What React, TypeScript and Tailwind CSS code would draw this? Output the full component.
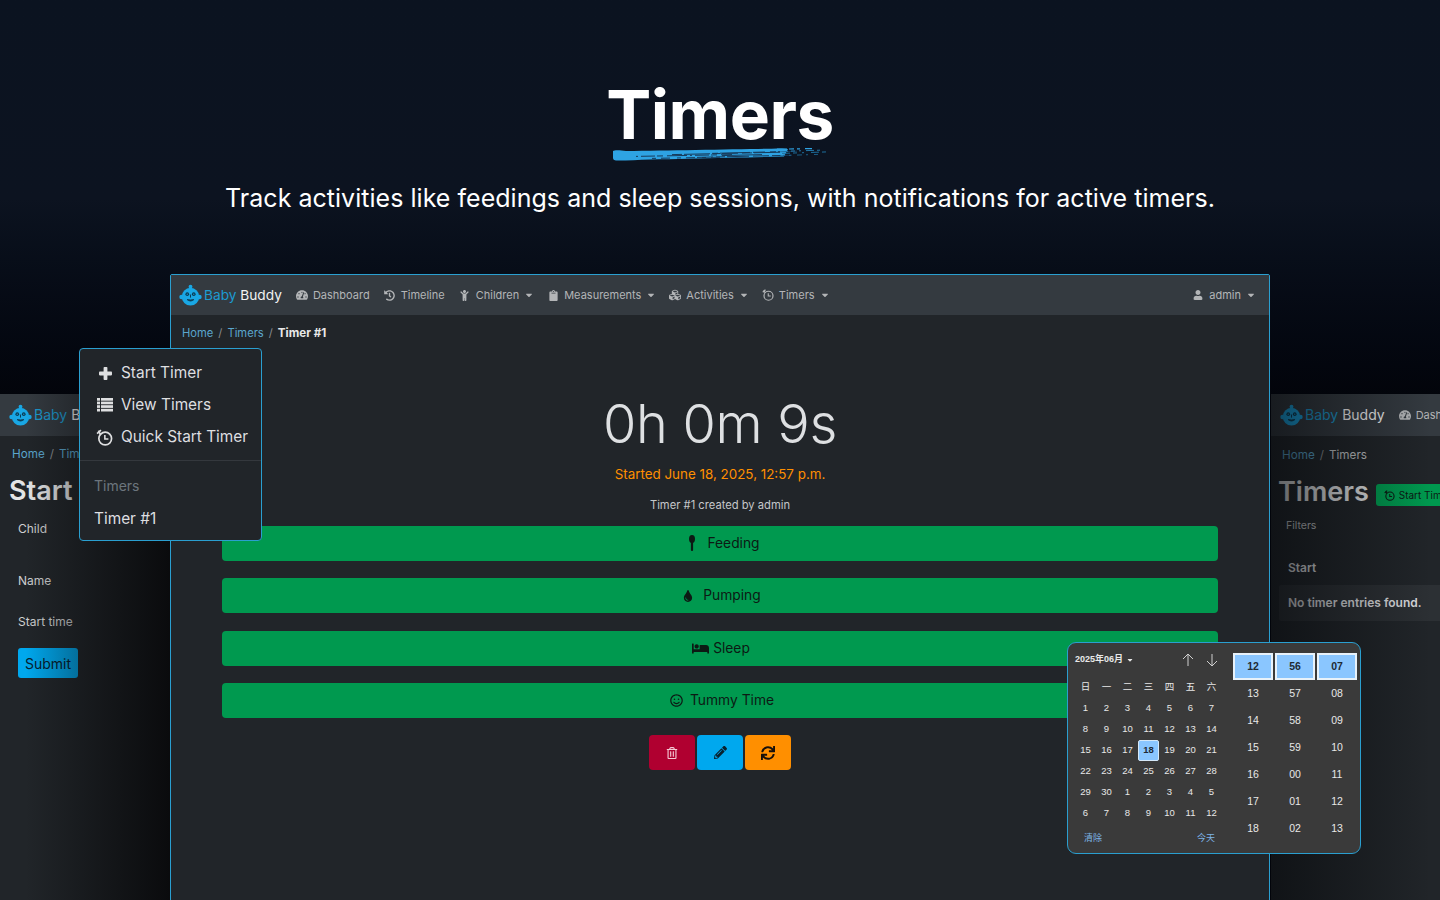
import React from "react";
import { FaBed, FaCaretDown, FaChild, FaClipboard, FaCubes, FaHistory, FaPencilAlt, FaRegSmile, FaRegTrashAlt, FaSync, FaTachometerAlt, FaTint, FaUser } from "react-icons/fa";

function Logo({ size = 23 }: { size?: number }) {
  return (
    <svg width={size} height={size} viewBox="0 0 24 24" className="shrink-0">
      <circle cx="12" cy="13.2" r="9.2" fill="#19a7e4" />
      <circle cx="2.6" cy="13.5" r="2.3" fill="#19a7e4" />
      <circle cx="21.4" cy="13.5" r="2.3" fill="#19a7e4" />
      <circle cx="12" cy="2.8" r="2" fill="#19a7e4" />
      <rect x="11" y="3" width="2" height="3" fill="#19a7e4" />
      <circle cx="8.6" cy="10.6" r="1.9" fill="#0a3a52" />
      <circle cx="15.4" cy="10.6" r="1.9" fill="#0a3a52" />
      <circle cx="8.6" cy="10.6" r="0.7" fill="#19a7e4" />
      <circle cx="15.4" cy="10.6" r="0.7" fill="#19a7e4" />
      <path d="M12 11v3.2" stroke="#0a3a52" strokeWidth="1" />
      <path d="M8.5 16.3c2.2 1.9 4.8 1.9 7 0-2.3.5-4.7.5-7 0z" fill="#0a3a52" stroke="#0a3a52" strokeWidth="0.9" strokeLinejoin="round" />
    </svg>
  );
}

function TimerIcon({ size = 12, className = "" }: { size?: number; className?: string }) {
  return (
    <svg width={size} height={size} viewBox="0 0 24 24" fill="none" stroke="currentColor" className={`shrink-0 ${className}`}>
      <circle cx="13" cy="13.5" r="9" strokeWidth="2.4" />
      <path d="M12.5 8.5v5.5h5" strokeWidth="2.2" />
      <path d="M1.5 6.5 7 1.5M3.5 2.2l3 6" strokeWidth="2.4" />
    </svg>
  );
}

function ListIcon() {
  return (
    <svg width="16" height="14" viewBox="0 0 16 14" fill="currentColor" className="shrink-0">
      {[0, 3.6, 7.2, 10.8].map((y) => (
        <g key={y}>
          <rect x="0" y={y} width="3" height="2.7" />
          <rect x="4" y={y} width="12" height="2.7" />
        </g>
      ))}
    </svg>
  );
}

function PlusIcon() {
  return (
    <svg width="13" height="13" viewBox="0 0 13 13" fill="currentColor" className="shrink-0 mr-[1px]">
      <rect x="4.6" y="0" width="3.8" height="13" rx="0.8" />
      <rect x="0" y="4.6" width="13" height="3.8" rx="0.8" />
    </svg>
  );
}

function SpoonIcon() {
  return (
    <svg width="8" height="16" viewBox="0 0 8 16" fill="currentColor" className="shrink-0">
      <ellipse cx="4" cy="4" rx="3" ry="4" />
      <rect x="2.9" y="6" width="2.2" height="10" rx="1" />
    </svg>
  );
}

function NavItem({ icon, label, caret }: { icon: React.ReactNode; label: string; caret?: boolean }) {
  return (
    <div className="flex items-center gap-[5px] text-[#b3b5b7] text-[11px] leading-[14px] whitespace-nowrap">
      <div className="w-[12px] flex justify-center">{icon}</div>
      <span>{label}</span>
      {caret && <FaCaretDown className="text-[10px] -mr-[1px]" />}
    </div>
  );
}

function Brand({ textClass }: { textClass: string }) {
  return (
    <div className="flex items-center gap-[2px] shrink-0">
      <Logo />
      <span className={`${textClass} leading-[18px] -mt-[1px] whitespace-nowrap`}>
        <span className="text-[#1c9bd1]">Baby</span> <span className="text-[#f2f2f2]">Buddy</span>
      </span>
    </div>
  );
}

const actions = [
  { label: "Feeding", icon: <SpoonIcon />, cls: "gap-[11px] pl-[8px]" },
  { label: "Pumping", icon: <FaTint className="text-[12px]" />, cls: "gap-[9px] pl-[3px]" },
  { label: "Sleep", icon: <FaBed className="text-[17px]" />, cls: "gap-[4px] pl-[2px]" },
  { label: "Tummy Time", icon: <FaRegSmile className="text-[13px]" />, cls: "gap-[7px] pl-[4px]" },
];

const weeks = [
  [1, 2, 3, 4, 5, 6, 7],
  [8, 9, 10, 11, 12, 13, 14],
  [15, 16, 17, 18, 19, 20, 21],
  [22, 23, 24, 25, 26, 27, 28],
  [29, 30, 1, 2, 3, 4, 5],
  [6, 7, 8, 9, 10, 11, 12],
];
const times = [
  ["12", "56", "07"],
  ["13", "57", "08"],
  ["14", "58", "09"],
  ["15", "59", "10"],
  ["16", "00", "11"],
  ["17", "01", "12"],
  ["18", "02", "13"],
];

function Calendar() {
  return (
    <div className="absolute left-[1067px] top-[642px] w-[294px] h-[212px] bg-[#3a3a3a] border border-[#2a9fd0] rounded-[9px] flex pl-[7px] pr-[3px] [font-family:'Liberation_Sans','Noto_Sans_CJK_SC',sans-serif] text-[#e8e8e8]">
      <div className="w-[154px] flex flex-col pt-[8px]">
        <div className="flex items-center h-[17px] text-[9px] font-bold whitespace-nowrap">
          <span className="flex items-center gap-[3px]">2025年06月<FaCaretDown className="text-[8px]" /></span>
          <svg width="14" height="14" viewBox="0 0 14 14" fill="none" stroke="#cfcfcf" strokeWidth="1" className="ml-[47px]"><path d="M7 13V1M2 6l5-5 5 5" /></svg>
          <svg width="14" height="14" viewBox="0 0 14 14" fill="none" stroke="#cfcfcf" strokeWidth="1" className="ml-[10px]"><path d="M7 1v12M2 8l5 5 5-5" /></svg>
        </div>
        <div className="grid grid-cols-7 w-[147px] mt-[9px] text-[9.5px] text-center">
          {["日", "一", "二", "三", "四", "五", "六"].map((d) => (
            <div key={d} className="h-[21px] flex items-center justify-center">{d}</div>
          ))}
          {weeks.flat().map((d, i) => (
            <div key={i} className="h-[21px] flex items-center justify-center">
              <span className={i === 17 ? "w-[21px] h-[21px] flex items-center justify-center rounded-[2px] bg-[#8ac6ff] border border-[#d5e8f8] text-[#1f2a33] font-bold" : ""}>{d}</span>
            </div>
          ))}
        </div>
        <div className="flex justify-between w-[140px] pl-[9px] mt-[8px] text-[9px] text-[#7db4e6]">
          <span>清除</span>
          <span>今天</span>
        </div>
      </div>
      <div className="flex flex-col pt-[10px] pl-[11px] text-[10.5px]">
        {times.map((row, r) => (
          <div key={r} className="flex gap-[2px]">
            {row.map((t, c) => (
              <div key={c} className={`w-[40px] h-[27px] flex items-center justify-center ${r === 0 ? "bg-[#8ac6ff] border-2 border-[#e8f2fa] text-[#1f2a33] font-bold" : ""}`}>{t}</div>
            ))}
          </div>
        ))}
      </div>
    </div>
  );
}

function Dropdown() {
  const items = [
    { label: "Start Timer", icon: <PlusIcon /> },
    { label: "View Timers", icon: <ListIcon /> },
    { label: "Quick Start Timer", icon: <TimerIcon size={17} /> },
  ];
  return (
    <div className="absolute left-[79px] top-[348px] w-[183px] h-[193px] bg-[#212529] border border-[#2a9fd0] rounded-[4px] flex flex-col pt-[8px] text-[#dedfe0] text-[15.4px]">
      {items.map((it) => (
        <div key={it.label} className="h-[32px] flex items-center gap-[8px] whitespace-nowrap">
          <div className="w-[33px] flex justify-end">{it.icon}</div>
          <span>{it.label}</span>
        </div>
      ))}
      <div className="h-px bg-[#34383d] mt-[7px]" />
      <div className="pl-[14px] mt-[16px] text-[14px] leading-[17px] text-[#6c757d]">Timers</div>
      <div className="pl-[14px] mt-[15px] leading-[19px]">Timer #1</div>
    </div>
  );
}

function MainWindow() {
  return (
    <div className="absolute left-[170px] top-[274px] w-[1100px] h-[640px] bg-[#212529] border border-[#2a9fd0] rounded-t-[2px] flex flex-col">
      <div className="h-[40px] bg-[#343a40] flex items-center pl-[8px] pr-[14px] shrink-0">
        <Brand textClass="text-[13.7px]" />
        <div className="flex items-center gap-[14px] ml-[14px] flex-1">
          <NavItem icon={<FaTachometerAlt className="text-[12px]" />} label="Dashboard" />
          <NavItem icon={<FaHistory className="text-[11px]" />} label="Timeline" />
          <NavItem icon={<FaChild className="text-[11px]" />} label="Children" caret />
          <NavItem icon={<FaClipboard className="text-[11px]" />} label="Measurements" caret />
          <NavItem icon={<FaCubes className="text-[14px]" />} label="Activities" caret />
          <NavItem icon={<TimerIcon size={12} />} label="Timers" caret />
        </div>
        <NavItem icon={<FaUser className="text-[10px]" />} label="admin" caret />
      </div>
      <div className="flex items-center gap-[5px] pl-[11px] mt-[11px] text-[11.2px] leading-[15px] text-[#5ba6cd]">
        <span>Home</span><span className="text-[#8a8d90]">/</span><span>Timers</span><span className="text-[#8a8d90]">/</span>
        <span className="text-[#e8e8e8] font-bold text-[11.6px]">Timer #1</span>
      </div>
      <div className="flex flex-col items-center">
        <div className="text-[54px] font-light leading-[68px] mt-[49px] text-[#dee0e2] tracking-[-0.3px]">0h 0m 9s</div>
        <div className="text-[13.4px] leading-[17px] mt-[8px] text-[#ff8f00]">Started June 18, 2025, 12:57 p.m.</div>
        <div className="text-[11.2px] leading-[15px] mt-[15px] text-[#c5c7c9]">Timer #1 created by admin</div>
        <div className="w-[996px] mt-[12.5px] flex flex-col gap-[17.5px]">
          {actions.map((a) => (
            <div key={a.label} className={`h-[35px] rounded-[4px] bg-[#00994f] text-[#0c1a14] text-[13.8px] flex items-center justify-center ${a.cls}`}>
              {a.icon}
              <span>{a.label}</span>
            </div>
          ))}
        </div>
        <div className="flex gap-[2px] mt-[17px]">
          <div className="w-[46px] h-[35px] rounded-[4px] bg-[#b00030] text-[#f4c9d4] flex items-center justify-center"><FaRegTrashAlt className="text-[12px]" /></div>
          <div className="w-[46px] h-[35px] rounded-[4px] bg-[#00a8ee] text-[#08222f] flex items-center justify-center"><FaPencilAlt className="text-[13px]" /></div>
          <div className="w-[46px] h-[35px] rounded-[4px] bg-[#ff8f00] text-[#17100a] flex items-center justify-center"><FaSync className="text-[14px]" /></div>
        </div>
      </div>
    </div>
  );
}

function LeftWindow() {
  return (
    <div className="absolute left-0 top-[394px] w-[170px] h-[506px] bg-[#212529] overflow-hidden">
      <div className="h-[42px] bg-[#343a40] flex items-center pl-[9px]"><Brand textClass="text-[14px]" /></div>
      <div className="flex gap-[5px] pl-[12px] mt-[11px] text-[11.7px] leading-[15px] text-[#5ba6cd] whitespace-nowrap">
        <span>Home</span><span className="text-[#8a8d90]">/</span><span>Timers</span>
      </div>
      <div className="pl-[9px] mt-[11px] text-[27px] font-semibold leading-[36px] text-[#e4e5e6]">Start</div>
      <div className="pl-[18px] text-[#cfd0d1] text-[12px] leading-[15px]">
        <div className="mt-[12px]">Child</div>
        <div className="mt-[37px]">Name</div>
        <div className="mt-[26px]">Start time</div>
      </div>
      <div className="ml-[18px] mt-[19px] w-[60px] h-[30px] rounded-[3px] bg-[#00a8ee] text-[#06202e] text-[14px] flex items-center justify-center">Submit</div>
      <div className="absolute inset-0 bg-gradient-to-r from-transparent from-[15%] to-[#0a0b0d] to-[100%]" />
    </div>
  );
}

function RightWindow() {
  return (
    <div className="absolute left-[1271px] top-[394px] w-[169px] h-[506px] bg-[#212529] overflow-hidden">
      <div className="h-[42px] bg-[#343a40] flex items-center pl-[9px] whitespace-nowrap">
        <Brand textClass="text-[14px]" />
        <div className="ml-[14px]"><NavItem icon={<FaTachometerAlt className="text-[12px]" />} label="Dashboard" /></div>
      </div>
      <div className="flex gap-[5px] pl-[11px] mt-[12px] text-[11.7px] leading-[15px] text-[#5ba6cd] whitespace-nowrap">
        <span>Home</span><span className="text-[#8a8d90]">/</span><span className="text-[#c5c7c9]">Timers</span>
      </div>
      <div className="flex items-center gap-[7px] pl-[7px] mt-[11px] whitespace-nowrap">
        <span className="text-[27px] font-semibold leading-[36px] text-[#e4e5e6]">Timers</span>
        <span className="h-[22px] w-[100px] mt-[6px] shrink-0 rounded-[3px] bg-[#00994f] text-[#0c1a14] text-[10px] flex items-center gap-[4px] pl-[8px]"><TimerIcon size={11} />Start Timer</span>
      </div>
      <div className="pl-[15px] mt-[9px] text-[10.5px] leading-[13px] text-[#c5c7c9]">Filters</div>
      <div className="pl-[17px] mt-[28px] text-[12px] leading-[15px] font-semibold text-[#dedfe0]">Start</div>
      <div className="ml-[8px] mt-[10px] h-[36px] rounded-l-[2px] bg-[#2c3034] flex items-center pl-[9px] text-[12px] font-semibold text-[#dedfe0] whitespace-nowrap">No timer entries found.</div>
      <div className="absolute inset-0 bg-gradient-to-l from-transparent from-[5%] to-[#05070a]/60 to-[100%]" />
    </div>
  );
}

const streaks: [number, number, number, number, string][] = [
  [24, 8.4, 120, 6.6, "2 3 14 2 6 4 20 3"],
  [60, 6.6, 170, 4.2, "10 2 26 3 7 2 16 4"],
  [85, 9.4, 180, 7.2, "16 3 9 2 22 4"],
  [100, 5.4, 185, 3.2, "6 2 30 3 12 5"],
  [110, 7.6, 150, 6.6, "40 2"],
  [40, 10.4, 110, 9.2, "4 5 9 7"],
];

function BrushStroke() {
  return (
    <svg width="220" height="14" viewBox="0 0 220 14" className="mt-[-2px] ml-[3px] blur-[0.35px]">
      <path d="M1 3 C2 2 8 2 14 3 C60 2.4 130 1 170 .4 L176 1 L172 8.6 C120 9.6 50 11 6 12.6 Q1 12.6 1 10z" fill="#2ea3e3" />
      {streaks.map(([x1, y1, x2, y2, d], i) => (
        <path key={i} d={`M${x1} ${y1}L${x2} ${y2}`} stroke="#173a5a" strokeWidth="1" strokeDasharray={d} />
      ))}
      <path d="M165 1.2 L200 .6" stroke="#2ea3e3" strokeWidth="1.2" strokeDasharray="10 2 5 3 3 5" />
      <path d="M168 3.4 L208 2.2" stroke="#2ea3e3" strokeWidth="1" strokeDasharray="8 3 4 4 2 5" opacity="0.7" />
      <path d="M170 5.4 L218 3.8" stroke="#1d6f9e" strokeWidth="1" strokeDasharray="8 3 4 5 2 7" />
      <path d="M168 7.6 L206 6.4" stroke="#1d6f9e" strokeWidth="0.8" strokeDasharray="5 4 2 6" />
    </svg>
  );
}

export default function App() {
  return (
    <div className="relative w-[1440px] h-[900px] overflow-hidden bg-gradient-to-b from-[#0b1320] via-[#0c1320] via-[22%] to-[#02040a] to-[45%] [font-family:Inter,sans-serif]">
      <div className="flex flex-col items-center pt-[80px] text-white">
        <h1 className="text-[67.5px] leading-[70px] font-bold tracking-[-0.5px]">Timers</h1>
        <BrushStroke />
        <p className="mt-[20px] text-[25px] leading-[32px] tracking-[0.03px] whitespace-nowrap">Track activities like feedings and sleep sessions, with notifications for active timers.</p>
      </div>
      <LeftWindow />
      <RightWindow />
      <MainWindow />
      <Dropdown />
      <Calendar />
    </div>
  );
}
